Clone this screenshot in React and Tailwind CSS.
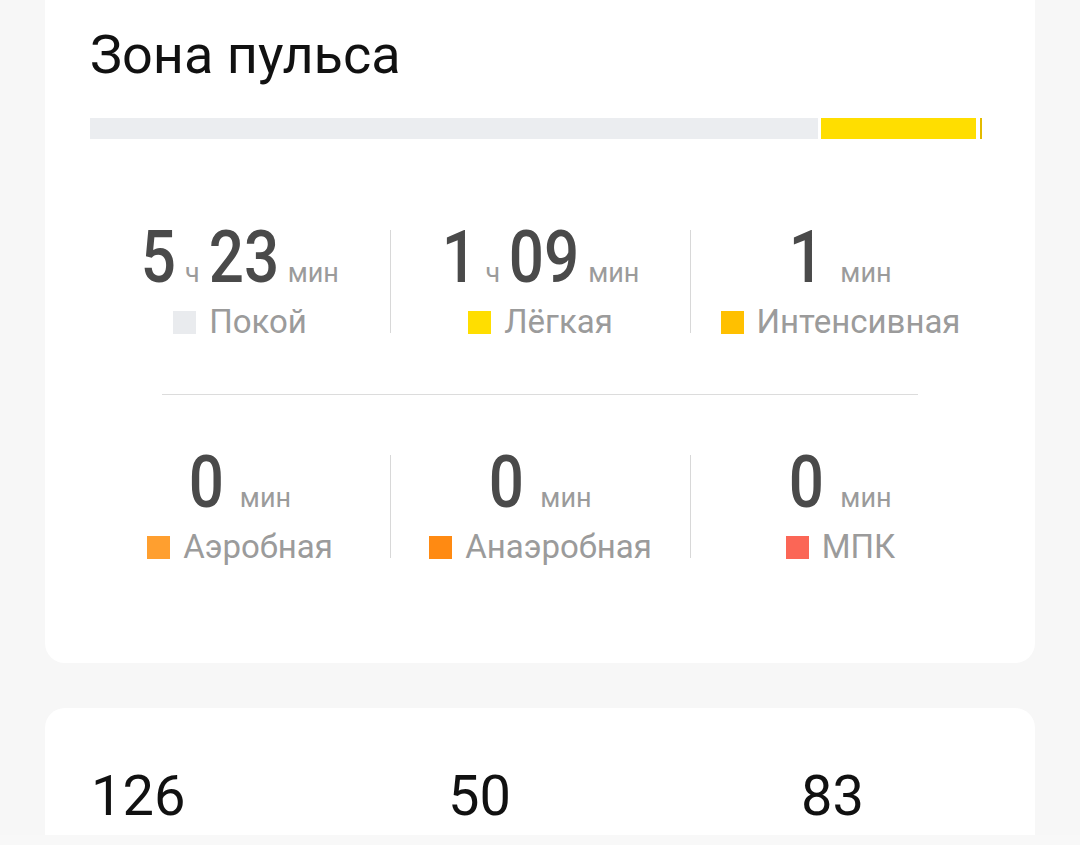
import React from 'react';

const FONT = { fontFamily: 'Roboto, "Noto Sans", sans-serif' };

const zones = [
  { parts: [['5', 'ч'], ['23', 'мин']], label: 'Покой', color: 'bg-[#e9ebee]' },
  { parts: [['1', 'ч'], ['09', 'мин']], label: 'Лёгкая', color: 'bg-[#ffde00]' },
  { parts: [['1', 'мин']], label: 'Интенсивная', color: 'bg-[#ffc000]' },
  { parts: [['0', 'мин']], label: 'Аэробная', color: 'bg-[#ff9f2f]' },
  { parts: [['0', 'мин']], label: 'Анаэробная', color: 'bg-[#ff8a12]' },
  { parts: [['0', 'мин']], label: 'МПК', color: 'bg-[#fb6656]' },
];

// digits in the reference are a narrow face, so squeeze Roboto a bit
const Num = ({ children }) => (
  <span
    className={`inline-block scale-x-[0.86] text-[72px] font-medium text-[#4a4a4a] ${
      children.length > 1 ? '-mx-[6px]' : '-mx-[3px]'
    }`}
  >
    {children}
  </span>
);

const ZoneCell = ({ zone, first }) => {
  const single = zone.parts.length === 1;
  return (
    <div className={`h-[103px] flex flex-col items-center ${first ? '' : 'border-l border-[#d8d8d8]'}`}>
      <div className="h-[56px] flex items-baseline leading-[56px]">
        {zone.parts.map(([num, unit], i) => (
          <React.Fragment key={i}>
            <span className={i > 0 ? 'ml-[9px]' : ''}>
              <Num>{num}</Num>
            </span>
            <span className={`text-[27px] leading-[20px] text-[#9b9b9b] ${single ? 'ml-[16px]' : 'ml-[9px]'}`}>
              {unit}
            </span>
          </React.Fragment>
        ))}
      </div>
      <div className="mt-[20px] flex items-center leading-[32px]">
        <span className={`w-[23px] h-[23px] ${zone.color}`} />
        <span className="ml-[13px] text-[33px] text-[#9b9b9b]">{zone.label}</span>
      </div>
    </div>
  );
};

export default function App() {
  return (
    <div className="h-[845px] flex flex-col bg-[#f7f7f7] overflow-hidden" style={FONT}>
      <div className="flex-1 overflow-hidden px-[45px]">
        {/* Heart rate zones */}
        <section className="bg-white rounded-b-[20px] px-[45px] pt-[28px] pb-[105px]">
          <h2 className="text-[54px] leading-none text-[#111] font-normal">Зона пульса</h2>

          <div className="mt-[36px] flex items-stretch h-[21px]">
            <div className="w-[728px] bg-[#ebedf0]" />
            <div className="ml-[3px] w-[155px] bg-[#ffde00]" />
            <div className="ml-[4px] w-[2px] bg-[#e3bb00]" />
          </div>

          <div className="mt-[91px] grid grid-cols-3">
            {zones.slice(0, 3).map((z, i) => (
              <ZoneCell key={z.label} zone={z} first={i === 0} />
            ))}
          </div>

          <div className="mt-[61px] mx-auto w-[756px] h-px bg-[#dcdcdc]" />

          <div className="mt-[60px] grid grid-cols-3">
            {zones.slice(3).map((z, i) => (
              <ZoneCell key={z.label} zone={z} first={i === 0} />
            ))}
          </div>
        </section>

        {/* Heart rate summary */}
        <section className="mt-[45px] bg-white rounded-[20px] px-[45px] pt-[60px] pb-[40px]">
          <div className="flex text-[56px] leading-none text-[#111]">
            <span className="w-[358px] pl-[1px]">126</span>
            <span className="w-[353px]">50</span>
            <span>83</span>
          </div>
        </section>
      </div>
      <div className="h-[10px] bg-[#f8f8f8]" />
    </div>
  );
}
